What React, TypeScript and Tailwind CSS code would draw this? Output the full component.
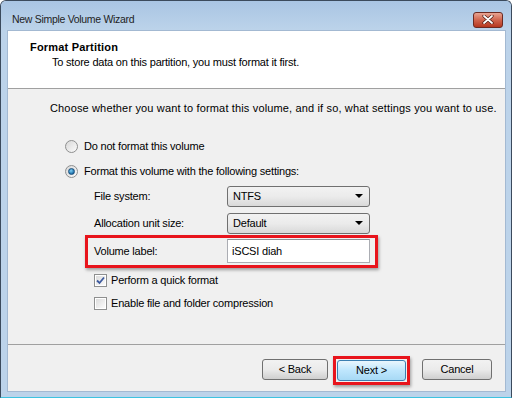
import React from "react"

const font = { fontFamily: '"Liberation Sans", Arial, sans-serif' }

function Radio({ checked }: { checked?: boolean }) {
  return (
    <span className="relative inline-block w-[13px] h-[13px] rounded-full border border-[#8e8f8f] bg-gradient-to-br from-[#d8d8d8] to-[#fbfbfb]">
      {checked && (
        <span className="absolute left-[2px] top-[2px] w-[7px] h-[7px] rounded-full bg-[radial-gradient(circle_at_40%_35%,#7fd0f6,#1d6fa9_70%,#0f3f6b)] border border-[#1b4f7c]" />
      )}
    </span>
  )
}

function Checkbox({ checked }: { checked?: boolean }) {
  return (
    <span className="relative inline-block w-[13px] h-[13px] border border-[#8e8f8f] bg-white">
      <span className="absolute inset-[1px] bg-gradient-to-br from-[#dcdcdc] to-[#fbfbfb]" />
      {checked && (
        <svg className="absolute left-[1px] top-[1px]" width="9" height="9" viewBox="0 0 9 9">
          <path d="M1 4.5 L3.5 7 L8 1.5" fill="none" stroke="#3d5a9e" strokeWidth="1.8" />
        </svg>
      )}
    </span>
  )
}

function Select({ value }: { value: string }) {
  return (
    <div className="w-[143px] h-[21px] rounded-[3px] border border-[#707070] bg-gradient-to-b from-[#f2f2f2] via-[#ebebeb] to-[#d9d9d9] flex items-center justify-between pl-[5px] pr-[6px] text-black">
      <span>{value}</span>
      <svg width="8" height="4" viewBox="0 0 8 4">
        <path d="M0 0 H8 L4 4 Z" fill="#000" />
      </svg>
    </div>
  )
}

function Button({ label, focused, w }: { label: string; focused?: boolean; w: string }) {
  return (
    <div
      className={
        (focused
          ? "h-[21px] rounded-[3px] border border-[#3c7fb1] bg-gradient-to-b from-[#eaf6fd] via-[#bee6fd] to-[#a7d9f5] flex items-center justify-center text-black "
          : "h-[21px] rounded-[3px] border border-[#707070] bg-gradient-to-b from-[#f2f2f2] via-[#ebebeb] to-[#cfcfcf] flex items-center justify-center text-black ") + w
      }
    >
      {label}
    </div>
  )
}

export default function App() {
  return (
    <div
      style={font}
      className="w-[512px] h-[398px] flex flex-col bg-[#bcd3ea] border-l border-r border-t border-[#3b4a5c] border-b border-b-[#3ec3e0] rounded-t-[6px] overflow-hidden text-[11px] tracking-[-0.2px] text-black"
    >
      {/* Title bar */}
      <div className="h-[29px] shrink-0 flex items-center justify-between pl-[11px] pr-[8px] bg-gradient-to-b from-[#a9c5e3] to-[#bcd3ea]">
        <span className="text-[10.5px] tracking-[-0.3px] text-[#1e1e1e] mt-[8px]">New Simple Volume Wizard</span>
        <div className="w-[30px] h-[16px] mt-[8px] rounded-[3px] border border-[#6b2a22] bg-gradient-to-b from-[#e8a493] via-[#d0644d] to-[#b5361e] flex items-center justify-center">
          <svg width="12" height="9" viewBox="0 0 12 9">
            <path d="M2 1 L10 8 M10 1 L2 8" stroke="#4a1810" strokeWidth="3.2" strokeLinecap="round" />
            <path d="M2 1 L10 8 M10 1 L2 8" stroke="#fff" strokeWidth="1.8" strokeLinecap="round" />
          </svg>
        </div>
      </div>

      {/* Client area */}
      <div className="flex-1 flex flex-col ml-[6px] mr-[5px] mb-[5px] bg-[#f0f0f0] border border-[#a3b9d2]">
        {/* Header */}
        <div className="h-[58px] shrink-0 bg-white border-b border-[#a0a0a0] pl-[22px] pt-[9px]">
          <div className="font-bold tracking-[0.2px] leading-[15px]">Format Partition</div>
          <div className="pl-[22px] leading-[15px]">To store data on this partition, you must format it first.</div>
        </div>

        {/* Body */}
        <div className="flex-1 flex flex-col pl-[42px] pt-[11px]">
          <div className="leading-[16px] whitespace-nowrap tracking-[0.15px]">
            Choose whether you want to format this volume, and if so, what settings you want to use.
          </div>

          <div className="mt-[20px] h-[20px] flex items-center gap-[6px] pl-[15px]">
            <Radio />
            <span>Do not format this volume</span>
          </div>
          <div className="mt-[5px] h-[20px] flex items-center gap-[6px] pl-[15px]">
            <Radio checked />
            <span>Format this volume with the following settings:</span>
          </div>

          <div className="mt-[4px] h-[22px] flex items-center pl-[44px]">
            <span className="w-[133px]">File system:</span>
            <Select value="NTFS" />
          </div>
          <div className="mt-[5px] h-[22px] flex items-center pl-[44px]">
            <span className="w-[133px]">Allocation unit size:</span>
            <Select value="Default" />
          </div>

          <div className="mt-[1px] ml-[35px] w-[293px] border-[3px] border-[#e8141c] shadow-[1px_2px_3px_rgba(0,0,0,0.35)] flex items-center pl-[6px] pt-[1px] pb-[2px]">
            <span className="w-[133px]">Volume label:</span>
            <div className="w-[143px] h-[24px] border border-[#abadb3] border-t-[#8e9196] bg-white flex items-center pl-[4px]">
              iSCSI diah
            </div>
          </div>

          <div className="mt-[4px] h-[16px] flex items-center gap-[4px] pl-[44px]">
            <Checkbox checked />
            <span>Perform a quick format</span>
          </div>
          <div className="mt-[7px] h-[16px] flex items-center gap-[4px] pl-[44px]">
            <Checkbox />
            <span>Enable file and folder compression</span>
          </div>
        </div>

        {/* Footer */}
        <div className="h-[47px] shrink-0 border-t border-[#a0a0a0] flex items-start justify-end pr-[13px] pt-[14px]">
          <Button label="< Back" w="w-[66px]" />
          <div className="ml-[5px] -mt-[3px] border-[3px] border-[#e8141c] shadow-[1px_2px_3px_rgba(0,0,0,0.35)] p-px">
            <Button label="Next >" focused w="w-[69px]" />
          </div>
          <div className="ml-[12px]">
            <Button label="Cancel" w="w-[70px]" />
          </div>
        </div>
      </div>
    </div>
  )
}
